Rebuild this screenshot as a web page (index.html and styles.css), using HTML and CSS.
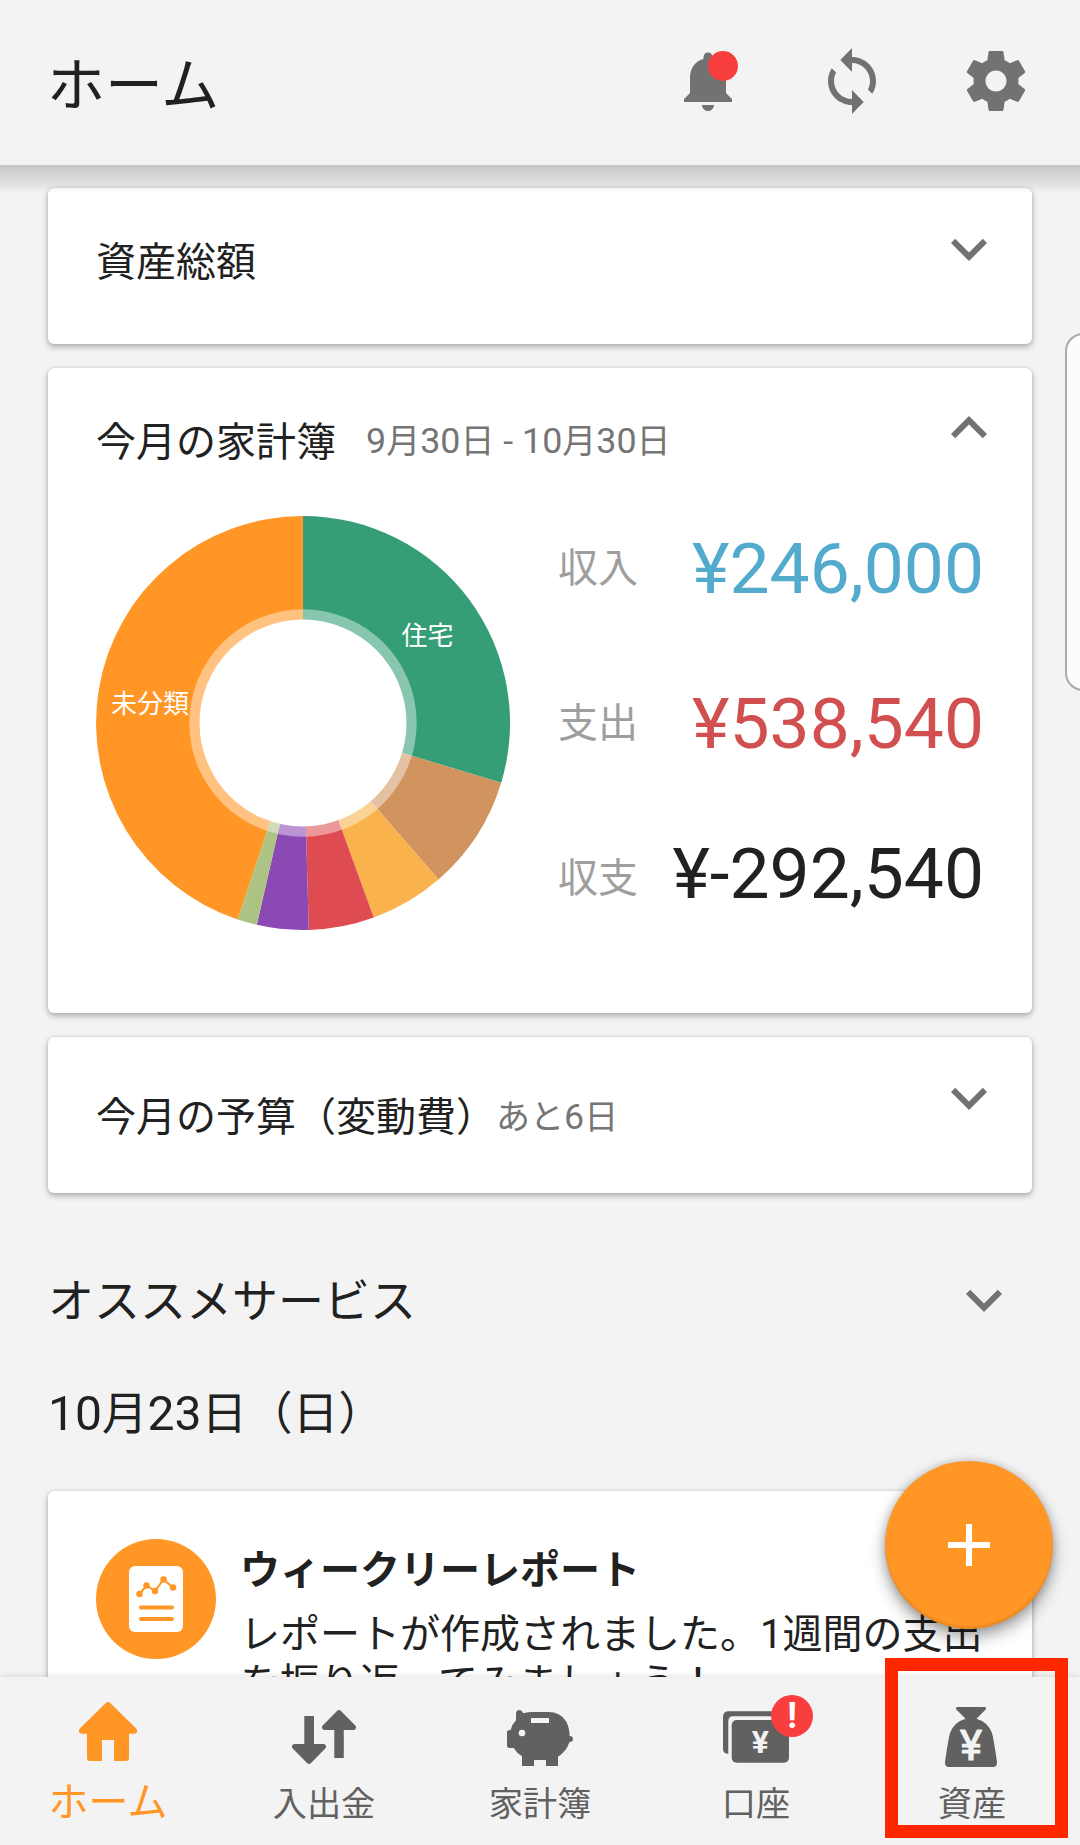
FILE: index.html
```html
<!DOCTYPE html>
<html lang="ja">
<head>
    <meta charset="utf-8">
    <meta name="viewport" content="width=device-width, initial-scale=1">
    <title>ホーム</title>
    <link rel="stylesheet" href="styles.css">
</head>
<body>
    <header class="header">
        <h1 class="header_title">ホーム</h1>
        <div class="header_icons">
            <div class="bell">
                <svg class="icon" viewBox="0 0 24 24"><path d="M12 22c1.1 0 2-.9 2-2h-4c0 1.1.89 2 2 2zm6-6v-5c0-3.07-1.64-5.64-4.5-6.32V4c0-.83-.67-1.5-1.5-1.5s-1.5.67-1.5 1.5v.68C7.63 5.36 6 7.92 6 11v5l-2 2v1h16v-1l-2-2z"/></svg>
                <span class="dot"></span>
            </div>
            <svg class="icon" viewBox="0 0 24 24"><path d="M12 4V1L8.1 5 12 9V6c3.31 0 6 2.69 6 6 0 1.01-.25 1.97-.7 2.8l1.46 1.46C19.54 15.03 20 13.57 20 12c0-4.42-3.58-8-8-8zm0 14c-3.31 0-6-2.69-6-6 0-1.01.25-1.97.7-2.8L5.24 7.74C4.46 8.97 4 10.43 4 12c0 4.42 3.58 8 8 8v3l3.9-4L12 15v3z"/></svg>
            <svg class="icon" viewBox="0 0 24 24"><path d="M19.43 12.98c.04-.32.07-.64.07-.98s-.03-.66-.07-.98l2.11-1.65c.19-.15.24-.42.12-.64l-2-3.46c-.12-.22-.39-.3-.61-.22l-2.49 1c-.52-.4-1.08-.73-1.69-.98l-.38-2.65C14.46 2.18 14.25 2 14 2h-4c-.25 0-.46.18-.49.42l-.38 2.65c-.61.25-1.17.59-1.69.98l-2.49-1c-.23-.09-.49 0-.61.22l-2 3.46c-.13.22-.07.49.12.64l2.11 1.65c-.04.32-.07.65-.07.98s.03.66.07.98l-2.11 1.65c-.19.15-.24.42-.12.64l2 3.46c.12.22.39.3.61.22l2.49-1c.52.4 1.08.73 1.69.98l.38 2.65c.03.24.24.42.49.42h4c.25 0 .46-.18.49-.42l.38-2.65c.61-.25 1.17-.59 1.69-.98l2.49 1c.23.09.49 0 .61-.22l2-3.46c.12-.22.07-.49-.12-.64l-2.11-1.65zM12 15.5c-1.93 0-3.5-1.57-3.5-3.5s1.57-3.5 3.5-3.5 3.5 1.57 3.5 3.5-1.57 3.5-3.5 3.5z"/></svg>
        </div>
    </header>

    <main class="content">
        <section class="card">
            <div class="card_head">
                <h2 class="card_title">資産総額</h2>
                <svg class="icon" viewBox="0 0 24 24"><path d="M7.41 8.59L12 13.17l4.59-4.58L18 10l-6 6-6-6z"/></svg>
            </div>
        </section>

        <section class="card card_big">
            <div class="card_head">
                <h2 class="card_title">今月の家計簿</h2>
                <span class="card_date"><span class="num">9</span>月<span class="num">30</span>日<span class="num"> - 10</span>月<span class="num">30</span>日</span>
                <svg class="icon" viewBox="0 0 24 24"><path d="M7.41 15.41L12 10.83l4.59 4.58L18 14l-6-6-6 6z"/></svg>
            </div>
            <div class="summary">
                <svg class="donut" viewBox="-207 -207 414 414">
                    <path fill="#359e76" d="M0 0V-207A207 207 0 0 1 198.2 59.8z"/>
                    <path fill="#d1945f" d="M0 0L198.2 59.8A207 207 0 0 1 135.5 156.5z"/>
                    <path fill="#fab34c" d="M0 0L135.5 156.5A207 207 0 0 1 70.8 194.5z"/>
                    <path fill="#de4c51" d="M0 0L70.8 194.5A207 207 0 0 1 5.8 206.9z"/>
                    <path fill="#8b49b4" d="M0 0L5.8 206.9A207 207 0 0 1 -46.2 201.8z"/>
                    <path fill="#adc384" d="M0 0L-46.2 201.8A207 207 0 0 1 -65.3 196.4z"/>
                    <path fill="#ff9626" d="M0 0L-65.3 196.4A207 207 0 0 1 0 -207z"/>
                    <circle r="113.7" fill="#fff" fill-opacity=".42"/>
                    <circle r="103.5" fill="#fff"/>
                    <text x="124.500" y="-78">住宅</text>
                    <text x="-153" y="-10.500">未分類</text>
                </svg>
                <div class="amounts">
                    <div class="amount">
                        <span class="amount_name">収入</span>
                        <span class="amount_sum blue">¥246,000</span>
                    </div>
                    <div class="amount">
                        <span class="amount_name">支出</span>
                        <span class="amount_sum red">¥538,540</span>
                    </div>
                    <div class="amount">
                        <span class="amount_name">収支</span>
                        <span class="amount_sum total">¥-292,540</span>
                    </div>
                </div>
            </div>
        </section>

        <section class="card">
            <div class="card_head budget">
                <h2 class="card_title">今月の予算（変動費）</h2>
                <span class="card_date">あと<span class="num">6</span>日</span>
                <svg class="icon" viewBox="0 0 24 24"><path d="M7.41 8.59L12 13.17l4.59-4.58L18 10l-6 6-6-6z"/></svg>
            </div>
        </section>

        <div class="service">
            <h2 class="section_title">オススメサービス</h2>
            <svg class="icon" viewBox="0 0 24 24"><path d="M7.41 8.59L12 13.17l4.59-4.58L18 10l-6 6-6-6z"/></svg>
        </div>
        <h2 class="section_title day"><span class="num">10</span>月<span class="num">23</span>日（日）</h2>

        <section class="card report">
            <svg class="report_icon" viewBox="0 0 120 120">
                <circle cx="60" cy="60" r="60" fill="#ff9626"/>
                <rect x="33" y="27" width="54" height="66" rx="6" fill="#fff"/>
                <g fill="none" stroke="#ff9626" stroke-linecap="round">
                    <path stroke-width="2" d="M43.500 55L50.500 46.500L59 52L67.500 40.500L77 48.500"/>
                    <path stroke-width="6.500" d="M43.500 55h.01M50.500 46.500h.01M59 52h.01M67.500 40.500h.01M77 48.500h.01"/>
                    <path stroke-width="4" d="M45 68.500h31M45 80h31"/>
                </g>
            </svg>
            <div class="report_text">
                <h3 class="report_title">ウィークリーレポート</h3>
                <p class="report_info">レポートが作成されました。1週間の支出<br>を振り返ってみましょう！</p>
            </div>
        </section>
    </main>

    <nav class="nav">
        <a class="nav_item active">
            <svg class="nav_icon" viewBox="0 0 72 72"><path d="M33.800 5.900Q36 4 38.200 5.900L64.200 31.500Q66 34 64.800 35.500Q64 36.700 62 36.700H57V61Q57 64 54 64H42V43H30V64H18Q15 64 15 61V36.700H10Q8 36.700 7.300 35.500Q6 34 7.800 31.500z"/></svg>
            <span>ホーム</span>
        </a>
        <a class="nav_item">
            <svg class="nav_icon" viewBox="0 0 72 72"><path d="M16.300 19H26V47H35.500Q37.400 47 38 48.800Q38.300 50.300 37.300 51.500L23 66Q21 68 19 66L4.700 51.500Q3.500 50.300 4 48.800Q4.600 47 6.500 47H16.300zM46.300 61H55.800V33H65.500Q67.400 33 68 31.200Q68.300 29.700 67.300 28.500L53 14Q51 12 49 14L34.700 28.500Q33.500 29.700 34 31.200Q34.600 33 36.500 33H46.300z"/></svg>
            <span>入出金</span>
        </a>
        <a class="nav_item">
            <svg class="nav_icon" viewBox="42 21 216 216">
                <path d="M78 72Q78 60 88 60Q95 60 100 70Q112 66 130 66H175Q212 66 229 95Q238 112 239 138Q249 138 249 147Q249 155 238 157Q230 184 204 200V228H168V210H132V228H96V199Q80 189 71 174H59Q51 174 51 166V128Q51 120 59 120H62Q66 103 78 91z"/>
                <path fill="#f3f3f3" d="M123 84h54v15h-54z"/>
                <circle cx="96" cy="129" r="10" fill="#f3f3f3"/>
            </svg>
            <span>家計簿</span>
        </a>
        <a class="nav_item">
            <svg class="nav_icon" viewBox="0 0 72 72">
                <path d="M3 52V20Q3 14.300 8.700 14.300H60V19.300H13Q8.300 19.300 8.300 24V56.700Q3 56.700 3 52z"/>
                <rect x="11.700" y="23" width="57.300" height="42.700" rx="5"/>
                <text x="40.300" y="55.700" font-size="32">¥</text>
            </svg>
            <b class="badge">!</b>
            <span>口座</span>
        </a>
        <a class="nav_item">
            <svg class="nav_icon" viewBox="0 0 72 72">
                <path d="M21.500 10H48.500Q51 10 49.600 12.500L40.500 21.700Q52 25 56 36Q57.500 41 61 65Q61.300 70 57 70H13Q8.700 70 9 65Q12.500 41 14 36Q18 25 29.500 21.700L20.400 12.500Q19 10 21.500 10z"/>
                <text class="bag_yen" x="35" y="62.500" font-size="42">¥</text>
            </svg>
            <span>資産</span>
        </a>
    </nav>

    <div class="side_handle"></div>
    <button class="fab"><svg viewBox="0 0 42 42"><path d="M18 0h6v18h18v6H24v18h-6V24H0v-6h18z"/></svg></button>
    <div class="frame"></div>
</body>
</html>
```
FILE: styles.css
```css
* {
    box-sizing: border-box;
}
body {
    position: relative;
    display: flex;
    flex-direction: column;
    height: 1845px;
    margin: 0;
    overflow: hidden;
    background-color: #f3f3f3;
    color: #212121;
    font-family: Roboto, "Noto Sans CJK JP", sans-serif;
}
h1, h2, h3, p {
    margin: 0;
    font-weight: 400;
}
.num {
    font-size: 1.053em;
    white-space: pre;
}
.icon {
    display: block;
    flex: none;
    width: 72px;
    height: 72px;
    fill: #727272;
}

/* header */
.header {
    position: relative;
    z-index: 1;
    flex: none;
    display: flex;
    justify-content: space-between;
    height: 165px;
    padding: 45px 48px 0;
    background-color: #f3f3f3;
}
.header::after {
    content: "";
    position: absolute;
    left: 0;
    right: 0;
    top: 165px;
    height: 28px;
    background: linear-gradient(rgba(0,0,0,.19), rgba(0,0,0,.07) 70%, rgba(0,0,0,0));
}
.header_title {
    margin-left: -1px;
    font-size: 58px;
    line-height: 82px;
}
.header_icons {
    display: flex;
    gap: 72px;
}
.bell {
    position: relative;
}
.dot {
    position: absolute;
    left: 36px;
    top: 6px;
    width: 30px;
    height: 30px;
    border-radius: 50%;
    background-color: #f93e3e;
}

/* cards */
.content {
    flex: 1;
    min-height: 0;
    overflow: hidden;
    padding: 23px 48px 0;
}
.card {
    height: 156px;
    margin-bottom: 24px;
    border-radius: 6px;
    background-color: #fff;
    box-shadow: 0 3px 6px rgba(0,0,0,.28), 0 0 3px rgba(0,0,0,.14);
}
.card_big {
    height: 645px;
}
.card_head {
    display: flex;
    padding: 25px 27px 0 48px;
}
.card_head .icon {
    margin-left: auto;
}
.card_title {
    margin-top: 20px;
    font-size: 40px;
    line-height: 60px;
}
.card_date {
    margin: 18px 0 0 30px;
    font-size: 34px;
    line-height: 60px;
    color: #757575;
}
.budget .card_title {
    margin-top: 26px;
}
.budget .card_date {
    margin: 25px 0 0;
}
.summary {
    display: flex;
    gap: 48px;
    padding: 18px 48px 0;
}
.card_big .icon {
    margin-top: -1px;
}
.donut {
    flex: none;
    width: 414px;
    height: 414px;
    margin-top: 25px;
}
.donut text {
    fill: #fff;
    font-size: 26px;
    text-anchor: middle;
}
.amounts {
    flex: 1;
}
.amount {
    display: flex;
    justify-content: space-between;
    height: 155px;
    line-height: 155px;
}
.amount_name {
    font-size: 40px;
    color: #9e9e9e;
}
.amount_sum {
    font-size: 71.3px;
}
.blue {
    color: #52aacc;
}
.red {
    color: #d14f4f;
}
.total {
    margin-top: -5px;
}

.service {
    display: flex;
    justify-content: space-between;
    align-items: center;
    margin: 70px 12px 0 0;
}
.section_title {
    padding-top: 2px;
    font-size: 46px;
    line-height: 72px;
}
.day {
    margin: 39px 0 40px;
    font-size: 45.6px;
}

.report {
    display: flex;
    gap: 24px;
    height: 260px;
    padding: 48px 0 0 48px;
}
.report_icon {
    flex: none;
    width: 120px;
    height: 120px;
}
.report_text {
    font-size: 40px;
    white-space: nowrap;
}
.report_title {
    font-size: 40px;
    font-weight: 700;
    line-height: 64px;
}
.report_info {
    line-height: 49px;
    margin-top: 7px;
}

/* bottom menu */
.nav {
    position: relative;
    flex: none;
    display: flex;
    height: 168px;
    padding-top: 20px;
    background-color: #f3f3f3;
    box-shadow: 0 -1px 6px rgba(0,0,0,.12);
}
.nav_item {
    position: relative;
    flex: 1;
    display: flex;
    flex-direction: column;
    align-items: center;
    font-size: 34.2px;
    line-height: 70px;
    color: #616161;
    fill: #616161;
}
.active {
    font-size: 40px;
    line-height: 68px;
    color: #ff9626;
    fill: #ff9626;
}
.nav_icon {
    display: block;
    width: 72px;
    height: 72px;
}
.nav_icon text {
    fill: #f3f3f3;
    font-weight: 700;
    text-anchor: middle;
}
.nav_icon .bag_yen {
    font-weight: 400;
    stroke: #f3f3f3;
    stroke-width: 1.2;
    stroke-linejoin: round;
}
.badge {
    position: absolute;
    left: 123px;
    top: -2px;
    width: 42px;
    height: 42px;
    border-radius: 50%;
    background-color: #f93e3e;
    color: #fff;
    font-size: 36px;
    line-height: 42px;
    text-align: center;
}

.side_handle {
    position: absolute;
    left: 1065px;
    top: 333px;
    width: 40px;
    height: 358px;
    border: 2px solid #aaa;
    border-radius: 18px;
    background-color: #fcfcfc;
}
.fab {
    position: absolute;
    left: 885px;
    top: 1461px;
    width: 168px;
    height: 168px;
    padding: 0;
    border: 0;
    border-radius: 50%;
    background-color: #ff9626;
    box-shadow: 0 8px 16px rgba(0,0,0,.36), 0 0 8px rgba(0,0,0,.16), inset 0 -3px 2px rgba(0,0,0,.08);
}
.fab svg {
    display: block;
    width: 42px;
    height: 42px;
    margin: 0 auto;
    fill: #fff;
}
.frame {
    position: absolute;
    left: 885px;
    top: 1658px;
    width: 183px;
    height: 180px;
    border: 13px solid #ff2600;
}
```
